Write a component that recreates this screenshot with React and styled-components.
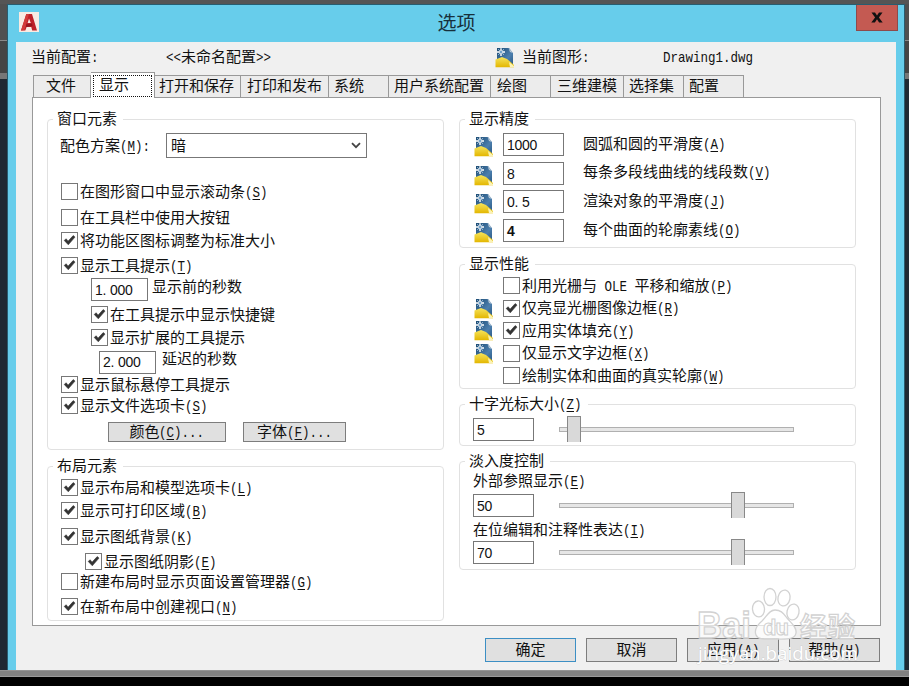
import React from 'react'
import styled, { createGlobalStyle } from 'styled-components'

const TABS = [
    { text: '文件', width: 58, pad: 12 },
    { text: '显示', width: 64, active: true },
    { text: '打开和保存', width: 86, pad: 4 },
    { text: '打印和发布', width: 88, pad: 6 },
    { text: '系统', width: 60, pad: 5 },
    { text: '用户系统配置', width: 102, pad: 5 },
    { text: '绘图', width: 60, pad: 6 },
    { text: '三维建模', width: 73, pad: 6 },
    { text: '选择集', width: 60, pad: 5 },
    { text: '配置', width: 60, pad: 5 },
]

const PRECISION = [
    { value: '1000', text: '圆弧和圆的平滑度(&A)', gap: 5, lift: 1 },
    { value: '8', text: '每条多段线曲线的线段数(&V)', gap: 6, lift: 2 },
    { value: '0.5', text: '渲染对象的平滑度(&J)', gap: 5, lift: 1 },
    { value: '4', text: '每个曲面的轮廓素线(&O)', gap: 6, lift: 1, bold: true },
]

const PERFORMANCE = [
    { text: '利用光栅与 OLE 平移和缩放(&P)', gap: 2 },
    { text: '仅亮显光栅图像边框(&R)', gap: 1, icon: true, checked: true },
    { text: '应用实体填充(&Y)', gap: 1, icon: true, checked: true },
    { text: '仅显示文字边框(&X)', gap: 1, icon: true },
    { text: '绘制实体和曲面的真实轮廓(&W)', gap: 1 },
]

// half width runs get the mono face, "&" marks the underlined access key
const Text = ({ children }) => (
    <Line>
        {children.split(/([\x20-\x7e]+)/).map((run, i) => {
            if (i % 2 === 0) return run
            const [before, after] = run.split('&')
            return (
                <Half key={i} $chars={run.replace('&', '').length}>
                    {before}
                    {after && <AccessKey>{after[0]}</AccessKey>}
                    {after && after.slice(1)}
                </Half>
            )
        })}
    </Line>
)

const Check = ({ checked, gap, indent, children }) => (
    <CheckRow $gap={gap} $indent={indent}>
        <Box>
            {checked && (
                <svg width="15" height="15" viewBox="0 0 15 15">
                    <path d="M2.2 7.4 L4.2 5.8 L6 8.2 L11.2 2.6 L13 4.1 L6.3 11.8 Z" fill="#333" stroke="#333" strokeWidth="0.6" />
                </svg>
            )}
        </Box>
        <Text>{children}</Text>
    </CheckRow>
)

const Field = ({ value, width, bold }) => (
    <Input $width={width} $bold={bold}>
        {value.split('').map((c, i) => <Digit key={i}>{c}</Digit>)}
    </Input>
)

const DrawingIcon = () => (
    <svg width="20" height="21" viewBox="0 0 20 21">
        <defs>
            <linearGradient id="sheet" x1="0" y1="0" x2="1" y2="1">
                <stop offset="0" stopColor="#1d4c74" />
                <stop offset="0.6" stopColor="#4c7fae" />
                <stop offset="1" stopColor="#26547e" />
            </linearGradient>
            <linearGradient id="gold" x1="0" y1="0" x2="0" y2="1">
                <stop offset="0" stopColor="#f6e45c" />
                <stop offset="1" stopColor="#e3b600" />
            </linearGradient>
        </defs>
        <path d="M2 1 H14 L18 6 V20 H2 Z" fill="url(#sheet)" />
        <path d="M13.5 1 L18 6 L15 5 Z" fill="#b9cad8" />
        <path d="M0.5 12.5 L7 10 L12 12 L19 18 V20.3 H0.5 Z" fill="url(#gold)" />
        <path d="M14 15 L19 19 V20.3 H15 Z" fill="#fbf3b4" />
        <path d="M6 1.2 V9 M2 5 H10" stroke="#fff" strokeWidth="1.4" />
        <path d="M3.2 2.2 L9 7.8 M9 2.2 L3.2 7.8" stroke="#c3dcf0" strokeWidth="0.8" />
        <circle cx="6" cy="5" r="1.1" fill="#5a94c4" />
    </svg>
)

const AppIcon = () => (
    <svg width="20" height="20" viewBox="0 0 20 20">
        <rect width="20" height="20" fill="#f8ebe3" />
        <path d="M2 18.5 L7.3 2 H13 L18 18.5 H13.2 L12.3 15 H7.6 L6.3 18.5 Z" fill="#bd2028" />
        <path d="M7.3 2 L10 2 L5.5 18 L2 18.5 Z" fill="#d23a38" />
        <path d="M10 6.5 L11.8 11 H8.6 Z" fill="#f8ebe3" />
        <path d="M7 12.5 L13 11.5 L13.5 14 L7 15 Z" fill="#94141d" />
    </svg>
)

const Slider = ({ at }) => (
    <Track>
        <Thumb $at={at} />
    </Track>
)

const Paw = () => (
    <Watermark width="172" height="84" viewBox="0 0 172 84">
        <g fill="#fff" fillOpacity="0.7" stroke="#d2d2d2" strokeWidth="1.3">
            <ellipse cx="64.5" cy="26" rx="6" ry="8" transform="rotate(-4 64 26)" />
            <ellipse cx="76" cy="14" rx="6" ry="8.5" />
            <ellipse cx="90" cy="15" rx="6" ry="8" transform="rotate(12 90 15)" />
            <ellipse cx="99" cy="29" rx="6" ry="8" transform="rotate(12 99 29)" />
            <path d="M81 27 C75 27 73 33 68 38 C62 43 60 47 62 52 C64 57 71 56 82 56 C92 56 101 57 102 50 C103 44 97 40 93 35 C89 30 87 27 81 27 Z" />
            <Brand x="3" y="55" textLength="54" lengthAdjust="spacingAndGlyphs">Bai</Brand>
            <Brand $size={27} x="106" y="54" textLength="55">经验</Brand>
        </g>
        <BrandInner x="69" y="52" textLength="26">du</BrandInner>
        <Url x="4" y="77" textLength="160" lengthAdjust="spacingAndGlyphs">jingyan.baidu.com</Url>
    </Watermark>
)

const App = () => (
    <Desktop>
        <GlobalStyle />
        <Ribbon />
        <Middle>
            <Edge $width={7} />
            <Dialog>
                <TitleBar>
                    <AppIcon />
                    <Title>选项</Title>
                    <Close>
                        <svg width="12" height="11" viewBox="0 0 12 11">
                            <path d="M0.5 0.5 H4 L6 3.6 L8 0.5 H11.5 L7.9 5.4 L11.7 10.5 H8.1 L6 7.3 L3.9 10.5 H0.3 L4.1 5.4 Z" fill="#111" />
                        </svg>
                    </Close>
                </TitleBar>
                <Client>
                    <Profile>
                        <ProfileCell $width={135}><Text>当前配置:</Text></ProfileCell>
                        <ProfileCell $width={329}><Text>{'<<未命名配置>>'}</Text></ProfileCell>
                        <ProfileCell $width={27}><DrawingIcon /></ProfileCell>
                        <ProfileCell $width={141}><Text>当前图形:</Text></ProfileCell>
                        <ProfileCell><Text>Drawing1.dwg</Text></ProfileCell>
                    </Profile>
                    <Tabs>
                        {TABS.map(t => t.active ? (
                            <ActiveTab key={t.text} $width={t.width}><Focus>{t.text}</Focus></ActiveTab>
                        ) : (
                            <Tab key={t.text} $width={t.width} $pad={t.pad}>{t.text}</Tab>
                        ))}
                    </Tabs>
                    <Panel>
                        <Column $width={397}>
                            <Group $height={331}>
                                <Legend><Text>窗口元素</Text></Legend>
                                <Row $gap={5} $indent={12} $height={25}>
                                    <SchemeLabel><Text>配色方案(&M):</Text></SchemeLabel>
                                    <Select>
                                        <Text>暗</Text>
                                        <svg width="10" height="7" viewBox="0 0 10 7">
                                            <path d="M1 1.2 L5 5.2 L9 1.2" fill="none" stroke="#444" strokeWidth="1.8" />
                                        </svg>
                                    </Select>
                                </Row>
                                <Check gap={25}>在图形窗口中显示滚动条(&S)</Check>
                                <Check gap={9}>在工具栏中使用大按钮</Check>
                                <Check gap={6} checked>将功能区图标调整为标准大小</Check>
                                <Check gap={8} checked>显示工具提示(&T)</Check>
                                <Row $gap={4} $indent={43} $height={23}>
                                    <Field value="1.000" width={57} />
                                    <FieldLabel $left={4} $lift={4}>显示前的秒数</FieldLabel>
                                </Row>
                                <Check gap={5} indent={30} checked>在工具提示中显示快捷键</Check>
                                <Check gap={6} indent={30} checked>显示扩展的工具提示</Check>
                                <Row $gap={5} $indent={51} $height={22}>
                                    <Field value="2.000" width={57} />
                                    <FieldLabel $left={6} $lift={4}>延迟的秒数</FieldLabel>
                                </Row>
                                <Check gap={3} checked>显示鼠标悬停工具提示</Check>
                                <Check gap={4} checked>显示文件选项卡(&S)</Check>
                                <Row $gap={8} $indent={60} $height={20}>
                                    <Button $width={118}><Text>颜色(&C)...</Text></Button>
                                    <Button $width={103} $left={17}><Text>字体(&F)...</Text></Button>
                                </Row>
                            </Group>
                            <Group $height={155} $gap={16}>
                                <Legend><Text>布局元素</Text></Legend>
                                <Check gap={4} checked>显示布局和模型选项卡(&L)</Check>
                                <Check gap={6} checked>显示可打印区域(&B)</Check>
                                <Check gap={9} checked>显示图纸背景(&K)</Check>
                                <Check gap={8} indent={24} checked>显示图纸阴影(&E)</Check>
                                <Check gap={3}>新建布局时显示页面设置管理器(&G)</Check>
                                <Check gap={8} checked>在新布局中创建视口(&N)</Check>
                            </Group>
                        </Column>
                        <Column $width={397}>
                            <Group $height={129}>
                                <Legend><Text>显示精度</Text></Legend>
                                {PRECISION.map(p => (
                                    <Row key={p.text} $gap={p.gap} $indent={14} $height={23}>
                                        <IconCell $drop={2}><DrawingIcon /></IconCell>
                                        <Field value={p.value} width={61} bold={p.bold} />
                                        <FieldLabel $left={19} $lift={p.lift}><Text>{p.text}</Text></FieldLabel>
                                    </Row>
                                ))}
                            </Group>
                            <Group $height={125} $gap={16}>
                                <Legend><Text>显示性能</Text></Legend>
                                {PERFORMANCE.map(p => (
                                    <Row key={p.text} $gap={p.gap} $indent={14} $height={21.5}>
                                        <IconCell>{p.icon && <DrawingIcon />}</IconCell>
                                        <Check indent={-13} checked={p.checked}>{p.text}</Check>
                                    </Row>
                                ))}
                            </Group>
                            <Group $height={42} $gap={15}>
                                <Legend><Text>十字光标大小(&Z)</Text></Legend>
                                <Row $gap={5} $indent={13} $height={23}>
                                    <Field value="5" width={61} />
                                    <Slider at={7} />
                                </Row>
                            </Group>
                            <Group $height={109} $gap={15}>
                                <Legend><Text>淡入度控制</Text></Legend>
                                <Row $gap={1} $indent={13} $height={20}><Text>外部参照显示(&E)</Text></Row>
                                <Row $gap={3} $indent={13} $height={23}>
                                    <Field value="50" width={61} />
                                    <Slider at={171} />
                                </Row>
                                <Row $gap={3} $indent={13} $height={20}><Text>在位编辑和注释性表达(&I)</Text></Row>
                                <Row $gap={1} $indent={13} $height={23}>
                                    <Field value="70" width={61} />
                                    <Slider at={171} />
                                </Row>
                            </Group>
                        </Column>
                    </Panel>
                    <Footer>
                        <Button $width={91} $primary><Text>确定</Text></Button>
                        <Button $width={91}><Text>取消</Text></Button>
                        <Button $width={92}><Text>应用(&A)</Text></Button>
                        <Button $width={91}><Text>帮助(&H)</Text></Button>
                    </Footer>
                </Client>
            </Dialog>
            <Edge $width={4} />
        </Middle>
        <Shelf />
        <Paw />
    </Desktop>
)

export default App

const GlobalStyle = createGlobalStyle`
    * {
        box-sizing: border-box;
    }

    body {
        margin: 0;
        background-color: #000;
    }
`

const Desktop = styled.div`
    position: relative;
    width: 909px;
    height: 686px;
    overflow: hidden;
    display: flex;
    flex-direction: column;
    background-color: #000;
    font-family: 'Noto Sans CJK SC', sans-serif;
    font-size: 15px;
    line-height: 18px;
    color: #111;
    white-space: pre;
`

const Ribbon = styled.div`
    height: 4px;
    background-color: #555;
`

const Middle = styled.div`
    display: flex;
    height: 666px;
`

const Edge = styled.div`
    width: ${props => props.$width}px;
    background: linear-gradient(#505050 0 36px, #8a8a8a 36px 37px, #454545 37px 69px, #777 69px 75px, #1f2932 75px);
`

const Shelf = styled.div`
    height: 7px;
    background-color: #808080;
    border-top: 1px solid #929292;
    border-bottom: 1px solid #999;
`

const Dialog = styled.div`
    width: 898px;
    display: flex;
    flex-direction: column;
    border: 1px solid #285d70;
    border-bottom: none;
    background-color: #67cdeb;
`

const TitleBar = styled.div`
    display: flex;
    align-items: flex-start;
    justify-content: space-between;
    height: 37px;
    padding-left: 11px;
    padding-right: 6px;

    > svg {
        margin-top: 7px;
    }
`

const Title = styled.div`
    font-size: 19px;
    line-height: 33px;
    color: #17303b;
    padding-left: 18px;
`

const Close = styled.div`
    display: flex;
    align-items: center;
    justify-content: center;
    width: 42px;
    height: 26px;
    background-color: #c45a52;
    border: 1px solid #8e4a4b;
    border-top: none;
`

const Client = styled.div`
    display: flex;
    flex-direction: column;
    flex: 1;
    margin: 0 8px;
    padding: 0 15px 0 16px;
    background-color: #f0f0f0;
`

const Profile = styled.div`
    display: flex;
    align-items: center;
    height: 30px;
    margin-left: -1px;
`

const ProfileCell = styled.div`
    display: flex;
    align-items: center;
    width: ${props => props.$width ? `${props.$width}px` : 'auto'};
`

const Line = styled.span`
    display: block;
    height: 18px;
    margin-bottom: 2px;
`

// 15px mono squeezed from 9px to 7.5px per character
const Half = styled.span`
    display: inline-block;
    font-family: 'Liberation Mono', monospace;
    font-size: 15px;
    line-height: 15px;
    transform: scaleX(0.8333);
    transform-origin: left;
    margin-right: ${props => props.$chars * -1.5}px;
`

const AccessKey = styled.span`
    text-decoration: underline;
    text-underline-offset: 2px;
`

const Tabs = styled.div`
    display: flex;
    align-items: flex-end;
    height: 26px;
    padding-left: 1px;
    margin-bottom: -1px;
    z-index: 1;
`

const Tab = styled.div`
    width: ${props => props.$width}px;
    height: 23px;
    padding-left: ${props => props.$pad}px;
    line-height: 18px;
    background-color: #ececec;
    border: 1px solid #999;
    border-left-width: ${props => props.$pad === 12 ? 1 : 0}px;
`

const ActiveTab = styled.div`
    width: ${props => props.$width}px;
    height: 26px;
    padding: 2px;
    background-color: #fff;
    border: 1px solid #999;
    border-left: none;
    border-bottom: none;
`

const Focus = styled.div`
    height: 22px;
    padding-left: 5px;
    line-height: 15px;
    border: 1px dotted #111;
`

const Panel = styled.div`
    display: flex;
    gap: 15px;
    height: 529px;
    padding: 21px 0 0 14px;
    background-color: #fff;
    border: 1px solid #999;
`

const Column = styled.div`
    display: flex;
    flex-direction: column;
    width: ${props => props.$width}px;
`

const Group = styled.div`
    display: flex;
    flex-direction: column;
    flex-shrink: 0;
    height: ${props => props.$height}px;
    margin-top: ${props => props.$gap || 0}px;
    border: 1px solid #e1e1e1;
    border-radius: 4px;
`

const Legend = styled.div`
    display: flex;
    align-items: center;
    width: fit-content;
    height: 18px;
    margin: -10px 0 0 5px;
    padding: 0 6px 0 4px;
    background-color: #fff;
    flex-shrink: 0;
`

const Row = styled.div`
    display: flex;
    align-items: center;
    flex-shrink: 0;
    height: ${props => props.$height}px;
    margin-top: ${props => props.$gap}px;
    padding-left: ${props => props.$indent}px;
`

const CheckRow = styled.div`
    display: flex;
    align-items: center;
    flex-shrink: 0;
    height: 17px;
    margin-top: ${props => props.$gap || 0}px;
    margin-left: ${props => 13 + (props.$indent || 0)}px;
`

const Box = styled.div`
    width: 17px;
    height: 17px;
    margin-right: 2px;
    flex-shrink: 0;
    display: flex;
    background-color: #fff;
    border: 1px solid #777;
`

const SchemeLabel = styled.div`
    width: 106px;
`

const Select = styled.div`
    display: flex;
    align-items: center;
    justify-content: space-between;
    width: 201px;
    height: 25px;
    padding: 0 5px 0 4px;
    border: 1px solid #777;
`

const Input = styled.div`
    display: flex;
    align-items: center;
    width: ${props => props.$width}px;
    height: 23px;
    padding-left: 3px;
    font-family: 'Liberation Sans', Arial, sans-serif;
    font-size: 14px;
    font-weight: ${props => props.$bold ? 'bold' : 'normal'};
    border: 1px solid #777;
    background-color: #fff;
`

const Digit = styled.span`
    width: 7.5px;
`

const FieldLabel = styled.div`
    padding-left: ${props => props.$left}px;
    padding-bottom: ${props => props.$lift * 2}px;
`

const IconCell = styled.div`
    display: flex;
    width: 29px;
    padding-top: ${props => (props.$drop || 0) * 2}px;
    flex-shrink: 0;
`

const Button = styled.div`
    display: flex;
    align-items: center;
    justify-content: center;
    width: ${props => props.$width}px;
    height: 100%;
    margin-left: ${props => props.$left || 0}px;
    background-color: #e0e0e0;
    border: 1px solid ${props => props.$primary ? '#3c8fc4' : '#7d7d7d'};
`

const Track = styled.div`
    position: relative;
    width: 235px;
    height: 5px;
    margin-left: 25px;
    background-color: #e6e6e6;
    border: 1px solid #b0b0b0;
`

const Thumb = styled.div`
    position: absolute;
    top: -12px;
    left: ${props => props.$at}px;
    width: 14px;
    height: 26px;
    background-color: #d9d9d9;
    border: 1px solid #888;
    border-bottom: none;
`

const Footer = styled.div`
    display: flex;
    justify-content: flex-end;
    gap: 10px;
    height: 24px;
    margin-top: 12px;
    padding-right: 1px;
`

const Watermark = styled.svg`
    position: absolute;
    left: 694px;
    top: 583px;
`

const Brand = styled.text`
    font-family: 'Liberation Sans', 'Noto Sans CJK SC', sans-serif;
    font-size: ${props => props.$size || 36}px;
    font-weight: bold;
`

const BrandInner = styled.text`
    font-family: 'Liberation Sans', Arial, sans-serif;
    font-size: 22px;
    font-weight: bold;
    fill: #fff;
    stroke: #cfcfcf;
    stroke-width: 1px;
`

const Url = styled.text`
    font-family: 'Open Sans', sans-serif;
    font-size: 19px;
    fill: #fff;
    stroke: #c4c4c4;
    stroke-width: 0.6px;
    paint-order: stroke;
`
